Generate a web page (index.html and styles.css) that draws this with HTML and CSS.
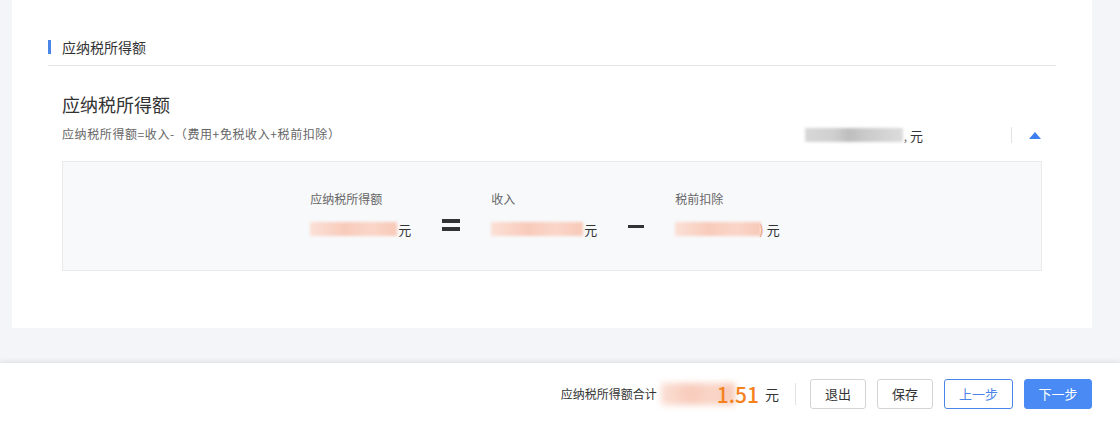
FILE: index.html
```html
<!DOCTYPE html>
<html lang="zh-CN">
<head>
    <meta charset="UTF-8">
    <meta name="viewport" content="width=device-width, initial-scale=1.0">
    <title>应纳税所得额</title>
    <link rel="stylesheet" href="styles.css">
</head>
<body>
    <div class="card">
        <div class="section-head">应纳税所得额</div>
        <div class="section-body">
            <h2 class="title">应纳税所得额</h2>
            <div class="formula-row">
                <div class="formula">应纳税所得额=收入-（费用+免税收入+税前扣除）</div>
                <div class="summary">
                    <span class="mask mask-grey"></span>
                    <span class="comma">,</span>
                    <span class="unit">元</span>
                    <span class="vline"></span>
                    <span class="arrow-up"></span>
                </div>
            </div>
            <div class="calc-box">
                <div class="calc-item">
                    <div class="calc-label">应纳税所得额</div>
                    <div class="calc-value">
                        <span class="mask" style="width: 87px"></span>
                        <span class="unit">元</span>
                    </div>
                </div>
                <div class="op op-eq"><i></i><i></i></div>
                <div class="calc-item">
                    <div class="calc-label">收入</div>
                    <div class="calc-value">
                        <span class="mask" style="width: 92px"></span>
                        <span class="unit">元</span>
                    </div>
                </div>
                <div class="op op-minus"><i></i></div>
                <div class="calc-item">
                    <div class="calc-label">税前扣除</div>
                    <div class="calc-value">
                        <span class="mask" style="width: 86px"></span>
                        <span class="paren">)</span>
                        <span class="unit">元</span>
                    </div>
                </div>
            </div>
        </div>
    </div>

    <div class="footer">
        <span class="total-label">应纳税所得额合计</span>
        <span class="mask mask-total"></span>
        <span class="total-num">1.51</span>
        <span class="total-unit">元</span>
        <span class="vline footer-line"></span>
        <button class="btn">退出</button>
        <button class="btn">保存</button>
        <button class="btn btn-outline">上一步</button>
        <button class="btn btn-primary">下一步</button>
    </div>
</body>
</html>
```

FILE: styles.css
```css
body {
    margin: 0;
    height: 424px;
    background: #f3f5f9;
    font-family: "Noto Sans CJK SC", "Noto Sans", sans-serif;
    color: #333;
    display: flex;
    flex-direction: column;
    overflow: hidden;
}

.card {
    margin: 0 28px 0 12px;
    height: 328px;
    box-sizing: border-box;
    background: #fff;
    padding: 37px 36px 0;
}

.section-head {
    display: flex;
    align-items: center;
    font-size: 14px;
    line-height: 20px;
    padding-bottom: 8px;
    border-bottom: 1px solid #e6e6e6;
    color: #333;
}

.section-head::before {
    content: '';
    width: 3px;
    height: 14px;
    background: #4a86e8;
    margin-right: 11px;
}

.section-body {
    padding: 0 14px;
}

.title {
    margin: 26px 0 0;
    font-size: 18px;
    font-weight: normal;
    line-height: 24px;
    color: #333;
}

.formula-row {
    display: flex;
    justify-content: space-between;
    align-items: flex-end;
    margin-top: 9px;
}

.formula {
    font-size: 12px;
    line-height: 18px;
    letter-spacing: 0.6px;
    color: #666;
    margin-bottom: 2px;
}

.summary {
    display: flex;
    align-items: center;
    height: 20px;
}

.mask {
    display: inline-block;
    height: 14px;
    background: linear-gradient(90deg, #fbe0d6, #f8cbbb 40%, #fad6c8 70%, #f7c9b8);
    filter: blur(1.5px);
}

.mask-grey {
    width: 98px;
    background: linear-gradient(90deg, #d8d8d8, #cfcfcf 30%, #bdbdbd 45%, #c9c9c9 60%, #dcdcdc);
}

.comma {
    font-size: 12px;
    color: #666;
    margin-left: 1px;
}

.unit {
    font-size: 13px;
    color: #333;
    margin-left: 3px;
}

.vline {
    display: inline-block;
    width: 1px;
    height: 16px;
    background: #e3e3e3;
}

.summary .vline {
    margin-left: 88px;
}

.arrow-up {
    margin-left: 17px;
    width: 0;
    height: 0;
    border-left: 6px solid transparent;
    border-right: 6px solid transparent;
    border-bottom: 7px solid #3d7fef;
    margin-right: 1px;
}

.calc-box {
    margin-top: 16px;
    height: 110px;
    box-sizing: border-box;
    background: #f8f9fb;
    border: 1px solid #e9eaec;
    padding-top: 29px;
    padding-right: 14px;
    display: flex;
    justify-content: center;
    align-items: flex-start;
}

.calc-label {
    font-size: 12px;
    line-height: 16px;
    color: #666;
}

.calc-value {
    display: flex;
    align-items: center;
    height: 20px;
    margin-top: 12px;
}

.calc-value .unit {
    margin-left: 1px;
}

.paren {
    font-size: 13px;
    color: #e07a3e;
    margin-left: -2px;
    margin-right: 2px;
}

.op {
    margin: 0 31px;
    padding-top: 28px;
    display: flex;
    flex-direction: column;
    gap: 4px;
}

.op i {
    display: block;
    width: 18px;
    height: 4px;
    background: #333;
}

.op-minus {
    padding-top: 34px;
}

.op-minus i {
    width: 16px;
    height: 3px;
}

.footer {
    margin-top: auto;
    height: 61px;
    background: #fff;
    box-shadow: 0 -2px 5px rgba(0, 0, 0, 0.08);
    display: flex;
    align-items: center;
    justify-content: flex-end;
    padding-right: 28px;
}

.total-label {
    font-size: 12px;
    color: #333;
}

.mask-total {
    width: 74px;
    height: 22px;
    margin-left: 4px;
    filter: blur(3px);
}

.total-num {
    font-size: 21px;
    font-weight: 500;
    color: #f5821f;
    margin-left: -18px;
    position: relative;
}

.total-unit {
    font-size: 14px;
    color: #333;
    margin-left: 6px;
}

.footer-line {
    height: 22px;
    margin: 0 14px 0 16px;
}

.btn {
    height: 30px;
    width: 56px;
    padding: 0;
    margin-left: 11px;
    font-family: inherit;
    font-size: 13px;
    color: #333;
    background: #fff;
    border: 1px solid #d4d4d4;
    border-radius: 3px;
}

.footer-line + .btn {
    margin-left: 0;
}

.btn-outline {
    width: 69px;
    color: #4a86e8;
    border-color: #4a86e8;
}

.btn-primary {
    width: 68px;
    color: #fff;
    background: #4a8af4;
    border-color: #4a8af4;
}
```
